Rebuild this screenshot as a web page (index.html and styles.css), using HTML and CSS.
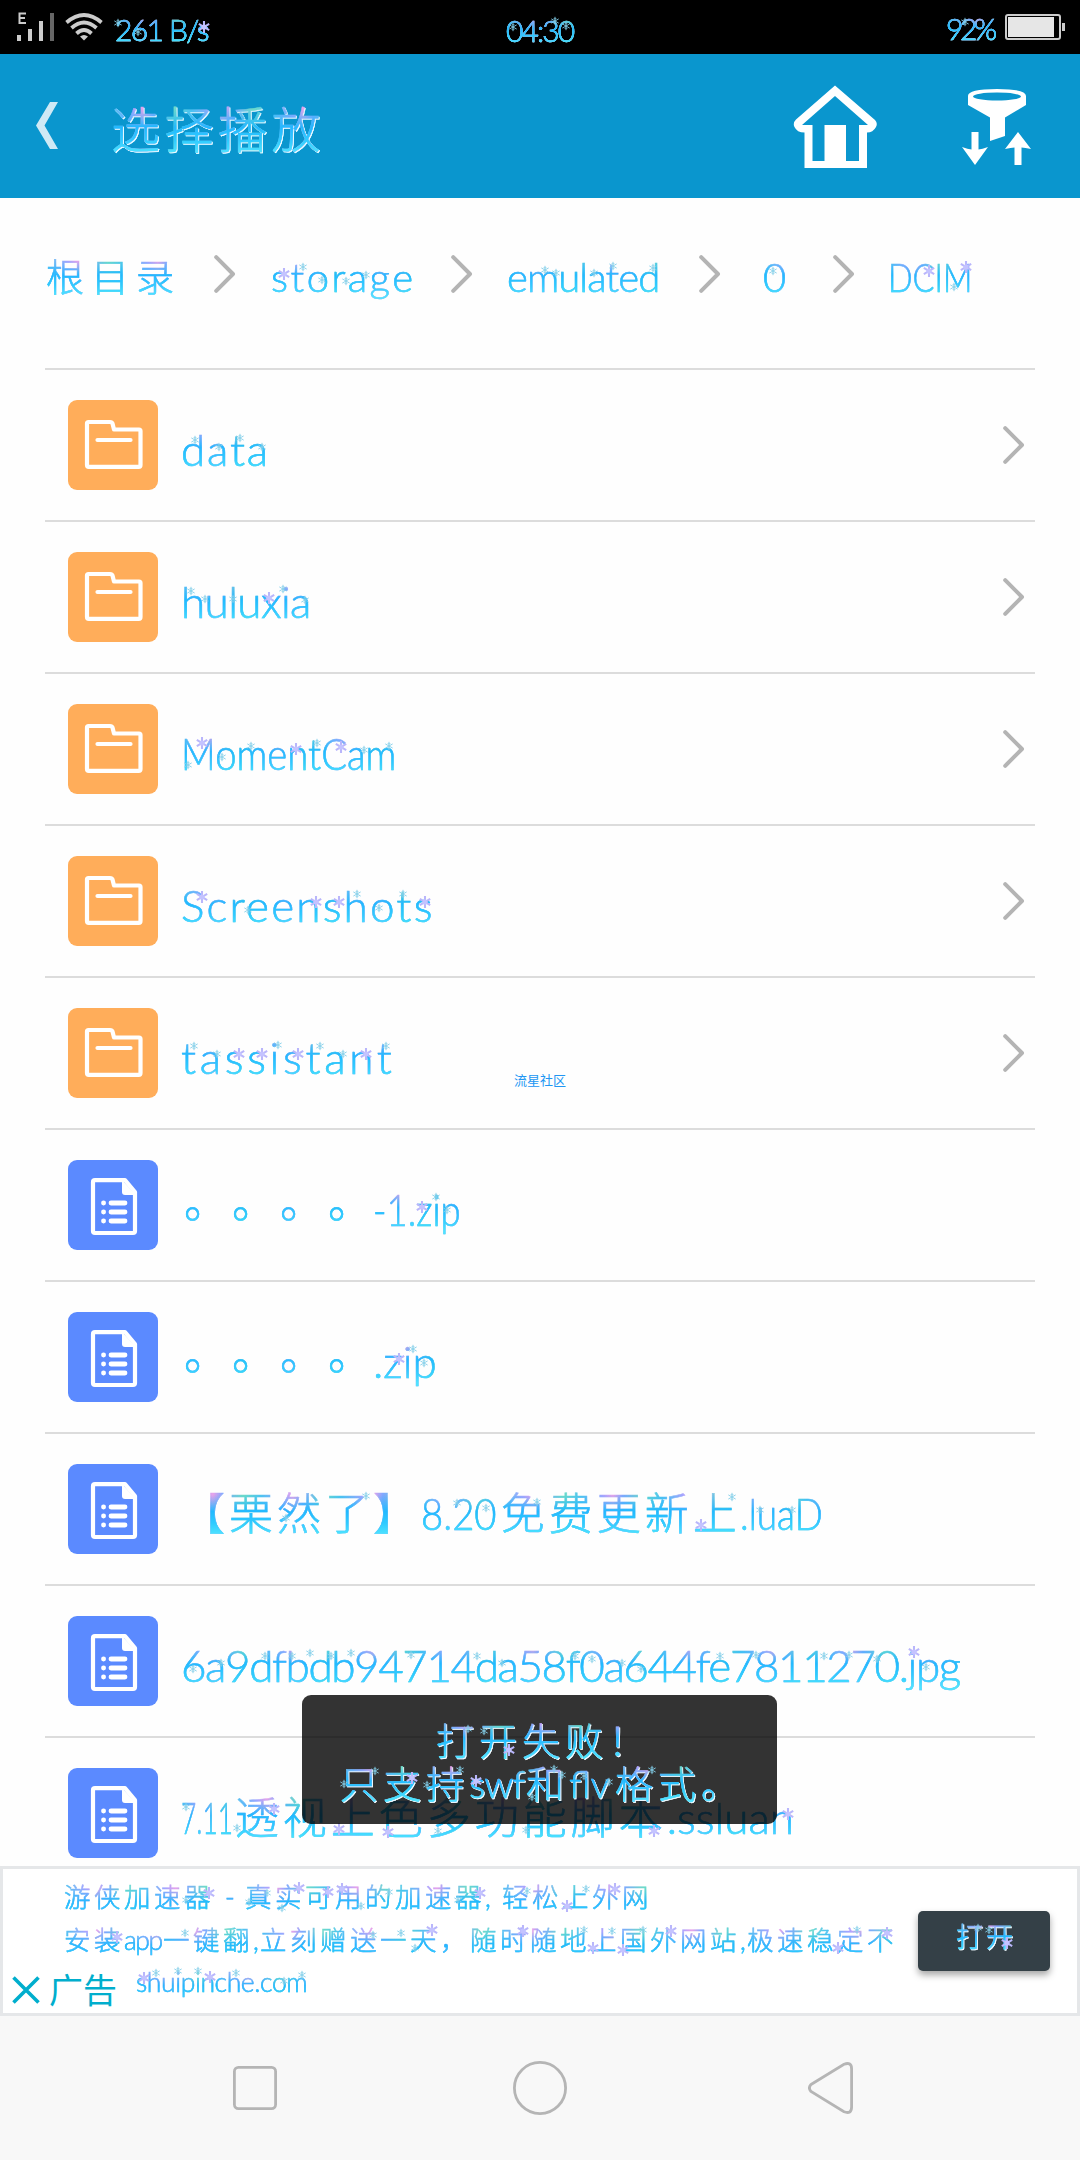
FILE: index.html
```html
<!DOCTYPE html>
<html lang="zh-CN">
<head>
<meta charset="utf-8">
<title>选择播放</title>
<link rel="stylesheet" href="styles.css">
</head>
<body>
<svg class="defs" width="0" height="0">
  <defs>
    <symbol id="chev" viewBox="0 0 22 38"><path d="M2.2 2.2 19 19 2.2 35.8" fill="none" stroke="#b4b4b4" stroke-width="4" stroke-linecap="round" stroke-linejoin="round"/></symbol>
    <symbol id="folder" viewBox="0 0 90 90"><rect width="90" height="90" rx="9" fill="#ffad5a"/><path d="M20.5 22H42q2 0 2.500 1.500L46 29.500h25q1.500 0 1.500 1.500V65q0 1.800-1.800 1.800H20.800Q19 66.800 19 65V23.500Q19 22 20.500 22Z" fill="none" stroke="#fff" stroke-width="4.200" stroke-linejoin="round"/><path d="M29.500 40h33" stroke="#fff" stroke-width="4.200" stroke-linecap="round"/></symbol>
    <symbol id="file" viewBox="0 0 90 90"><rect width="90" height="90" rx="9" fill="#5b8aff"/><path d="M27 20.200h30L67 32v39q0 2-2 2H27q-2 0-2-2V22.200q0-2 2-2Z" fill="none" stroke="#fff" stroke-width="4.200" stroke-linejoin="round"/><path d="M54 20v12q0 3 3 3h11Z" fill="#fff"/><path d="M43 43h14M43 52h14M43 61h14" stroke="#fff" stroke-width="4.800" stroke-linecap="round"/><path d="M35.500 43h.1M35.500 52h.1M35.500 61h.1" stroke="#fff" stroke-width="4.800" stroke-linecap="round"/></symbol>
    <marker id="small" viewBox="-6 -6 12 12" markerWidth="10" markerHeight="10" markerUnits="userSpaceOnUse"><path d="M0-5V5M-4.400-2.500 4.400 2.500M-4.400 2.500 4.400-2.500M-1.500-3.500 0-2 1.500-3.500M-1.500 3.500 0 2 1.500 3.500" stroke="#83cfe9" stroke-width="1.100" fill="none"/></marker>
    <marker id="big" viewBox="-6 -6 12 12" markerWidth="13" markerHeight="13" markerUnits="userSpaceOnUse"><path d="M0-5.500V5.500M-4.800-2.800 4.800 2.800M-4.800 2.800 4.800-2.800" stroke="#b9b6fb" stroke-width="1.900" fill="none"/><circle r="2.400" fill="#c4c3ff"/></marker>
  </defs>
</svg>
<div class="screen">
  <header class="status">
    <svg class="signal" width="38" height="30" viewBox="0 0 38 30"><path d="M9 1.500H2.500V11H9M2.500 6H8" fill="none" stroke="#ccc" stroke-width="2"/><path d="M0 23h4v6H0ZM11 17h4v12h-4ZM22 9h4v20h-4Z" fill="#ccc"/><path d="M33 1h4v28h-4Z" fill="#666"/></svg>
    <svg class="wifi" width="38" height="28" viewBox="0 0 38 28"><g fill="none" stroke="#ccc" stroke-width="3.800"><path d="M1.500 9.500Q19-5.500 36.500 9.500"/><path d="M6.500 15Q19 4 31.500 15"/><path d="M11.500 20.500Q19 13.500 26.500 20.500"/></g><path d="M15 23.500Q19 20.500 23 23.500L19 27.500Z" fill="#ccc"/></svg>
    <span class="t glow speed">261 B/s</span>
    <span class="t glow clock">04:30</span>
    <span class="t glow level">92%</span>
    <svg class="battery" width="61" height="26" viewBox="0 0 61 26"><rect x="1" y="1" width="54" height="24" rx="2" fill="none" stroke="#ccc" stroke-width="2"/><path d="M3 3h46v20H3Z" fill="#e6e6e6"/><path d="M57 9h3v8h-3Z" fill="#ccc"/></svg>
  </header>
  <div class="bar">
    <svg class="back" width="22" height="47" viewBox="0 0 22 47"><path d="M14 0h8L8.500 23.500 22 47h-8L0 23.500Z" fill="#cfe9f5"/></svg>
    <h1 class="t glow">选择播放</h1>
    <svg class="home" width="84" height="84" viewBox="0 0 84 84"><path d="M42 .5 82 35Q85 38 83 42 80 47.500 74 47.500V83H11.500V47.500Q4 47.500 1.500 42-.5 38 3 34.500Z" fill="#fff"/><path d="M42 11 75 40H66V76H53V40H31.500V76H19.500V40H9Z" fill="#0a96ce"/></svg>
    <svg class="sort" width="70" height="76" viewBox="0 0 70 76"><path d="M6 7Q6 0 35 0T64 7v9L43 28.500V47L28 52V28.500L6 16Z" fill="#fff"/><ellipse cx="35" cy="7.500" rx="24" ry="4" fill="#0a96ce"/><path d="M9.500 43h7v17.500Q20 60 26 58L13 76 0 58q6 2 9.500 2.500ZM52.500 76h7V58.500Q63 58.500 69 60L56 43 43 60q6-1.500 9.500-1.500Z" fill="#fff"/></svg>
  </div>
  <nav class="crumbs">
    <span class="t c-root">根目录</span><svg class="chev"><use href="#chev"/></svg>
    <span class="t c-storage">storage</span><svg class="chev"><use href="#chev"/></svg>
    <span class="t c-emulated">emulated</span><svg class="chev"><use href="#chev"/></svg>
    <span class="t c-zero">0</span><svg class="chev"><use href="#chev"/></svg>
    <span class="t c-dcim">DCIM</span>
  </nav>
  <main class="list">
    <div class="row"><svg class="icon"><use href="#folder"/></svg><div class="name"><span class="t n-data">data</span></div><svg class="chev"><use href="#chev"/></svg></div>
    <div class="row"><svg class="icon"><use href="#folder"/></svg><div class="name"><span class="t n-hulu">huluxia</span></div><svg class="chev"><use href="#chev"/></svg></div>
    <div class="row"><svg class="icon"><use href="#folder"/></svg><div class="name"><span class="t n-moment">MomentCam</span></div><svg class="chev"><use href="#chev"/></svg></div>
    <div class="row"><svg class="icon"><use href="#folder"/></svg><div class="name"><span class="t n-shots">Screenshots</span></div><svg class="chev"><use href="#chev"/></svg></div>
    <div class="row"><svg class="icon"><use href="#folder"/></svg><div class="name"><span class="t n-tass">tassistant</span></div><svg class="chev"><use href="#chev"/></svg></div>
    <div class="row"><svg class="icon"><use href="#file"/></svg><div class="name"><span class="t dots">。。。。</span><span class="t n-zip1">-1.zip</span></div></div>
    <div class="row"><svg class="icon"><use href="#file"/></svg><div class="name"><span class="t dots">。。。。</span><span class="t n-zip">.zip</span></div></div>
    <div class="row"><svg class="icon"><use href="#file"/></svg><div class="name"><span class="t cjk">【栗然了】</span><span class="t n-820">8.20</span><span class="t cjk">免费更新上</span><span class="t n-lua">.luaD</span></div></div>
    <div class="row"><svg class="icon"><use href="#file"/></svg><div class="name"><span class="t n-hex">6a9dfbdb94714da58f0a644fe7811270.jpg</span></div></div>
    <div class="row"><svg class="icon"><use href="#file"/></svg><div class="name"><span class="t n-711">7.11</span><span class="t cjk">透视上色多功能脚本</span><span class="t n-ss">.ssluan</span></div></div>
  </main>
  <aside class="ad">
    <div class="copy">
      <p><span class="t">游侠加速器</span><span class="t dash">-</span><span class="t">真实可用的加速器</span><span class="t comma1">,</span><span class="t">轻松上外网</span></p>
      <p><span class="t">安装</span><span class="t app">app</span><span class="t">一键翻</span><span class="t comma2">,</span><span class="t">立刻赠送一天，随时随地上国外网站</span><span class="t comma2">,</span><span class="t">极速稳定不</span></p>
      <p class="site"><span class="t">shuipinche.com</span></p>
    </div>
    <button class="open"><span class="t glow">打开</span></button>
    <div class="mark"><svg width="28" height="28" viewBox="0 0 28 28"><path d="M1.500 1.500 26.500 26.500M26.500 1.500 1.500 26.500" stroke="#00aecd" stroke-width="3.600"/></svg><span>广告</span></div>
  </aside>
  <nav class="keys">
    <svg width="44" height="44" viewBox="0 0 44 44"><rect x="1.400" y="1.400" width="41.200" height="41.200" rx="4" /></svg>
    <svg width="54" height="54" viewBox="0 0 54 54"><circle cx="27" cy="27" r="25.600"/></svg>
    <svg width="46" height="52" viewBox="0 0 46 52"><path d="M3 22.500 36 2.200Q43.600-.5 43.600 7V45Q43.600 52.500 36 49.800L3 29.500Q-.2 26 3 22.500Z"/></svg>
  </nav>
  <div class="water">流星社区</div>
  <svg class="flakes" viewBox="0 0 1080 2160" width="1080" height="2160">
    <polyline class="big" points="204,27 284,274 929,271 966,267 269,598 202,743 296,749 341,747 202,897 316,902 339,902 425,902 239,1054 262,1054 298,1054 366,1054 422,1207 399,1359 701,1525 914,1652 274,1809 339,1829 388,1832 654,1831 788,1814 209,1893 299,1888 328,1892 342,1889 480,1893 567,1906 117,1937 432,1930 523,1931 593,1948 144,1978 210,1977 615,1889 671,1931 838,1948 623,1950 887,1933 1007,1943"/>
    <polyline class="small" points="118,23 138,32 513,27 555,21 566,26 965,22 303,267 322,280 346,281 366,275 545,270 556,273 594,273 613,266 653,268 773,271 954,287 195,440 219,447 240,438 262,447 191,591 205,599 233,599 283,589 305,600 188,765 222,757 251,746 317,743 364,750 389,746 248,910 357,894 379,908 403,894 194,1046 217,1054 278,1045 320,1046 343,1054 386,1046 436,1197 447,1210 413,1349 424,1363 286,1518 366,1496 457,1503 486,1508 537,1502 732,1497 760,1510 792,1510 193,1669 221,1663 265,1656 292,1656 310,1653 331,1656 351,1653 411,1655 477,1656 502,1663 575,1656 592,1659 622,1663 641,1669 720,1656 756,1655 824,1656 849,1655 877,1659 926,1667 186,1807 237,1828 438,1831 526,1830 267,1893 186,1900 249,1902 282,1908 361,1906 389,1892 458,1900 527,1891 185,1933 401,1933 373,1935 415,1948 584,1930 156,1973 178,1971 198,1971 236,1973 284,1981 302,1975 586,1889 612,1931 643,1930 857,1930 978,1928 989,1930"/>
  </svg>
  <div class="toast">
    <p><span class="t glow">打开失败！</span></p>
    <p><span class="t glow">只支持</span><span class="t glow swf">swf</span><span class="t glow">和</span><span class="t glow flv">flv</span><span class="t glow">格式。</span></p>
    <svg class="flakes" viewBox="302 1695 475 129" width="475" height="129">
      <polyline class="big" points="509,1750 412,1778 476,1781"/>
      <polyline class="small" points="468,1729 484,1731 375,1771 344,1784 460,1770 427,1785 554,1769 562,1775 532,1797 584,1776 609,1782 652,1770"/>
    </svg>
  </div>
</div>
</body>
</html>
```
FILE: styles.css
```css
* { box-sizing: border-box; }
body { margin: 0; font-family: Lato, "Noto Sans CJK SC", sans-serif; font-weight: 300; text-spacing-trim: space-all; }
.defs { position: absolute; }
.screen { position: relative; width: 1080px; height: 2160px; display: flex; flex-direction: column; background: #fefefe; overflow: hidden; }
h1, p { margin: 0; font-weight: 300; }
svg { flex: none; display: block; }

.t {
  display: inline-block;
  flex: none;
  white-space: nowrap;
  line-height: 1.2;
  color: transparent;
  transform-origin: left center;
  background:
    linear-gradient(to bottom, transparent 15%, #22b9ff 46%, #30cbff 68%, #4fe3ff 90%),
    repeating-linear-gradient(90deg, #4fc4f0 0, #a9a4ff 22px, #e8a3ea 32px, #7fa8ff 42px, #6fdcc8 62px, #4fc4f0 80px);
  -webkit-background-clip: text;
  background-clip: text;
  -webkit-text-stroke: .5px transparent;
}
.glow { filter: drop-shadow(1px 1px 0 #eefaff); }

.status { height: 54px; flex: none; background: #000; display: flex; align-items: flex-start; padding: 12px 16px 0 17px; }
.wifi { margin: 1px 0 0 10px; }
.status .t { font-size: 30px; }
.status .glow { filter: drop-shadow(.5px .5px 0 #9ab); }
.speed { margin-left: 12px; width: 391px; letter-spacing: -1.600px; margin-top: -1px; }
.clock { width: 440px; letter-spacing: -1.900px; }
.level { width: 59px; font-size: 30px; letter-spacing: -3.500px; margin-top: -2px; }
.battery { margin-top: 2px; }

.bar { height: 144px; flex: none; background: #0a96ce; display: flex; align-items: flex-start; padding: 31px 48px 0 36px; }
.back { margin-top: 17px; }
.bar h1 { margin: 15px 0 0 53px; width: 682px; font-size: 49px; letter-spacing: 4.500px; font-weight: 300; }
.home { margin-right: 85px; }
.sort { margin-top: 4px; }

.crumbs { height: 170px; flex: none; display: flex; align-items: flex-start; padding: 55px 0 0 46px; }
.crumbs .t { font-size: 40px; }
.chev { width: 22px; height: 38px; }
.crumbs .chev { margin-top: 2px; }
.crumbs .c-root { width: 168px; font-size: 38px; letter-spacing: 7px; margin-top: 1px; }
.c-storage { width: 180px; margin-left: 35px; letter-spacing: 2.500px; }
.c-emulated { width: 192px; margin-left: 34px; letter-spacing: -.9px; }
.c-zero { width: 70px; margin-left: 42px; }
.c-dcim { margin-left: 33px; transform: scaleX(.81); }

.list { height: 1498px; flex: none; margin: 0 45px; overflow: hidden; border-top: 2px solid #dcdcdc; }
.row { height: 152px; display: flex; align-items: center; border-bottom: 2px solid #dcdcdc; padding: 0 10px 0 23px; }
.icon { width: 90px; height: 90px; }
.name { flex: 1; display: flex; font-size: 44px; margin-left: 23px; padding-top: 9px; white-space: nowrap; }
.n-data { letter-spacing: 1.800px; }
.n-hulu { letter-spacing: -.6px; }
.n-moment { transform: scaleX(.87); }
.n-shots { letter-spacing: 2.200px; }
.n-tass { letter-spacing: 3.700px; }
.dots, .cjk { letter-spacing: 4px; }
.dots { margin-top: -8px; padding-left: 3px; width: 192px; height: 61px; }
.n-zip1 { transform: scaleX(.83); }
.n-820 { transform: scaleX(.87); margin-right: -7px; }
.n-lua { transform: scaleX(.84); margin-left: -1px; }
.n-hex { letter-spacing: -1.400px; }
.n-711 { transform: scaleX(.6); margin-right: -33px; }

.ad { position: relative; height: 150px; flex: none; background: #fff; border: 3px solid #e5e7e9; display: flex; }
.copy { width: 852px; margin-left: 61px; padding-top: 13px; font-size: 26.500px; letter-spacing: 3.500px; }
.copy p { height: 43px; display: flex; }
.dash { width: 31px; padding-left: 11px; }
.comma1 { width: 17px; }
.comma2 { width: 7px; }
.app { width: 39px; letter-spacing: -1.500px; }
.copy .site { padding-left: 72px; letter-spacing: -.4px; height: 40px; margin-top: -1px; }
.open { font: inherit; width: 132px; height: 60px; margin: 42px 0 0 2px; padding: 0 0 8px 4px; border: 0; border-radius: 5px; background: #344047; box-shadow: 0 4px 7px rgba(0,0,0,.35); font-size: 27px; letter-spacing: 3px; }
.mark { position: absolute; left: 0; bottom: 0; width: 116px; height: 46px; display: flex; align-items: center; gap: 9px; padding-left: 9px; font-size: 34px; font-weight: 400; line-height: 1; white-space: nowrap; color: #00aecd; }

.keys { height: 144px; flex: none; background: #f8f8f8; display: flex; align-items: center; padding-left: 233px; }
.keys svg { fill: none; stroke: #b5b5b5; stroke-width: 2.800; }
.keys svg + svg { margin-left: 236px; }
.keys svg + svg + svg { margin-left: 241px; }

.water { position: absolute; left: 514px; top: 1071px; font-size: 13px; line-height: 18px; font-weight: 400; color: #2196f3; }
.flakes { position: absolute; left: 0; top: 0; pointer-events: none; }
.flakes polyline { fill: none; stroke: none; }
.big { marker: url(#big); }
.small { marker: url(#small); }

.toast { position: absolute; left: 302px; top: 1695px; width: 475px; height: 129px; border-radius: 9px; background: rgba(0,0,0,.8); padding: 23px 0 0; font-size: 38px; letter-spacing: 5px; }
.toast p { display: flex; height: 43px; padding-left: 38px; }
.toast p:first-child { padding-left: 134px; }
.toast .swf { width: 57px; letter-spacing: -1px; }
.toast .flv { width: 46px; letter-spacing: 0; }
```
